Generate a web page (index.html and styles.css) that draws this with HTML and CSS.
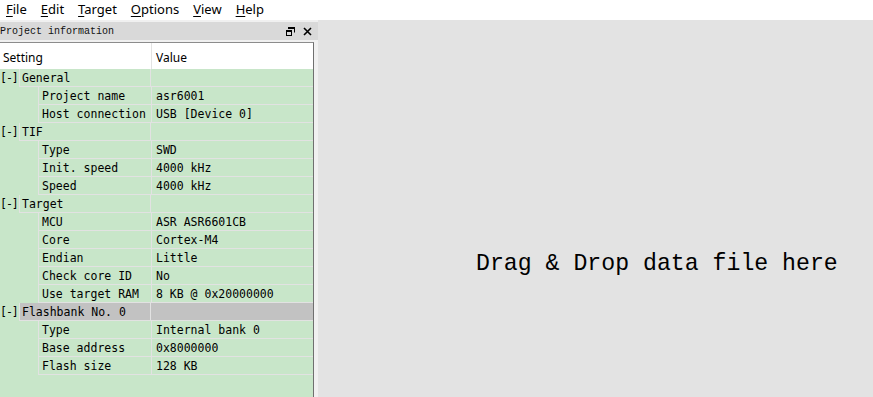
FILE: index.html
```html
<!DOCTYPE html>
<html lang="en">
<head>
  <meta charset="UTF-8">
  <title>J-Flash</title>
  <link rel="stylesheet" href="styles.css">
</head>
<body>

  <div class="menubar">
    <span class="menu"><u>F</u>ile</span>
    <span class="menu"><u>E</u>dit</span>
    <span class="menu"><u>T</u>arget</span>
    <span class="menu"><u>O</u>ptions</span>
    <span class="menu"><u>V</u>iew</span>
    <span class="menu"><u>H</u>elp</span>
  </div>

  <div class="workspace">
    <div class="panel">
      <div class="titlebar">
        <span class="title">Project information</span>
        <span class="tools">
          <svg width="9" height="9" viewBox="0 0 9 9">
            <path d="M2.5 0.5h6v5" fill="none" stroke="#000" stroke-width="1"/>
            <rect x="2" y="0" width="7" height="2" fill="#000"/>
            <rect x="0.5" y="3.5" width="5" height="5" fill="none" stroke="#000"/>
            <rect x="0" y="3" width="6" height="2" fill="#000"/>
          </svg>
          <svg width="9" height="9" viewBox="0 0 9 9">
            <path d="M1 1L8 8M8 1L1 8" stroke="#000" stroke-width="1.6"/>
          </svg>
        </span>
      </div>

      <div class="list">
        <div class="head">
          <div class="hcell key">Setting</div>
          <div class="hcell val">Value</div>
        </div>

        <div class="row group"><span class="toggle">[-]</span><div class="cell key">General</div><div class="cell val"></div></div>
        <div class="row"><div class="cell key">Project name</div><div class="cell val">asr6001</div></div>
        <div class="row"><div class="cell key">Host connection</div><div class="cell val">USB [Device 0]</div></div>

        <div class="row group"><span class="toggle">[-]</span><div class="cell key">TIF</div><div class="cell val"></div></div>
        <div class="row"><div class="cell key">Type</div><div class="cell val">SWD</div></div>
        <div class="row"><div class="cell key">Init. speed</div><div class="cell val">4000 kHz</div></div>
        <div class="row"><div class="cell key">Speed</div><div class="cell val">4000 kHz</div></div>

        <div class="row group"><span class="toggle">[-]</span><div class="cell key">Target</div><div class="cell val"></div></div>
        <div class="row"><div class="cell key">MCU</div><div class="cell val">ASR ASR6601CB</div></div>
        <div class="row"><div class="cell key">Core</div><div class="cell val">Cortex-M4</div></div>
        <div class="row"><div class="cell key">Endian</div><div class="cell val">Little</div></div>
        <div class="row"><div class="cell key">Check core ID</div><div class="cell val">No</div></div>
        <div class="row"><div class="cell key">Use target RAM</div><div class="cell val">8 KB @ 0x20000000</div></div>

        <div class="row group selected"><span class="toggle">[-]</span><div class="cell key">Flashbank No. 0</div><div class="cell val"></div></div>
        <div class="row"><div class="cell key">Type</div><div class="cell val">Internal bank 0</div></div>
        <div class="row"><div class="cell key">Base address</div><div class="cell val">0x8000000</div></div>
        <div class="row"><div class="cell key">Flash size</div><div class="cell val">128 KB</div></div>
      </div>
    </div>

    <div class="droparea">
      <div class="drop-text">Drag &amp; Drop data file here</div>
    </div>
  </div>

</body>
</html>
```

FILE: styles.css
```css
body {
  margin: 0;
  width: 873px;
  height: 397px;
  overflow: hidden;
  background: #ffffff;
  font-family: "Noto Sans", "DejaVu Sans", sans-serif;
  color: #000;
}

.menubar {
  height: 18px;
  padding-bottom: 2px;
  display: flex;
  align-items: center;
  gap: 14px;
  padding-left: 6px;
  font-size: 13px;
  background: #ffffff;
}

.menu u {
  text-decoration-thickness: 1px;
  text-underline-offset: 2px;
}

.workspace {
  display: flex;
  height: 377px;
}

.panel {
  width: 318px;
  background: #f0f0f0;
  display: flex;
  flex-direction: column;
}

.titlebar {
  margin-top: 2px;
  height: 18px;
  background: #d9d9d9;
  display: flex;
  align-items: center;
  justify-content: space-between;
  padding-right: 6px;
}

.title {
  font-family: "Liberation Mono", monospace;
  font-size: 10px;
  padding-top: 1px;
  color: #111;
}

.tools {
  display: flex;
  gap: 8px;
  align-items: center;
}

.list {
  margin-top: 2px;
  width: 313px;
  flex: 1;
  border-top: 1px solid #8c8c8c;
  border-right: 1px solid #6f6f6f;
  background: #c8e6c9;
  font-family: "DejaVu Sans Mono", monospace;
  font-size: 11.5px;
}

.head {
  display: flex;
  height: 26px;
  background: #ffffff;
}

.hcell {
  font-family: "Noto Sans", sans-serif;
  font-size: 12px;
  line-height: 29px;
}

.hcell.key {
  width: 148px;
  padding-left: 3px;
  border-right: 1px solid #e3e3e3;
}

.hcell.val {
  padding-left: 4px;
}

.row {
  display: flex;
  height: 18px;
  padding-left: 38px;
}

.row.group {
  padding-left: 0;
}

.toggle {
  width: 19px;
  line-height: 19px;
  font-size: 11.5px;
  letter-spacing: -1px;
  white-space: nowrap;
}

.cell {
  height: 17px;
  line-height: 19px;
  border-bottom: 1px solid #e2e2e2;
  border-left: 1px solid #e2e2e2;
  white-space: nowrap;
  overflow: hidden;
}

.cell.key {
  width: 109px;
  padding-left: 3px;
}

.group .cell.key {
  width: 128px;
  padding-left: 2px;
}

.cell.val {
  flex: 1;
  padding-left: 4px;
}

.selected .cell {
  background: #c2c2c2;
}

.droparea {
  flex: 1;
  background: #e3e3e3;
  padding-left: 158px;
  padding-top: 231px;
}

.drop-text {
  font-family: "Liberation Mono", monospace;
  font-size: 23.2px;
  line-height: 26px;
  color: #000;
  white-space: nowrap;
}
```
